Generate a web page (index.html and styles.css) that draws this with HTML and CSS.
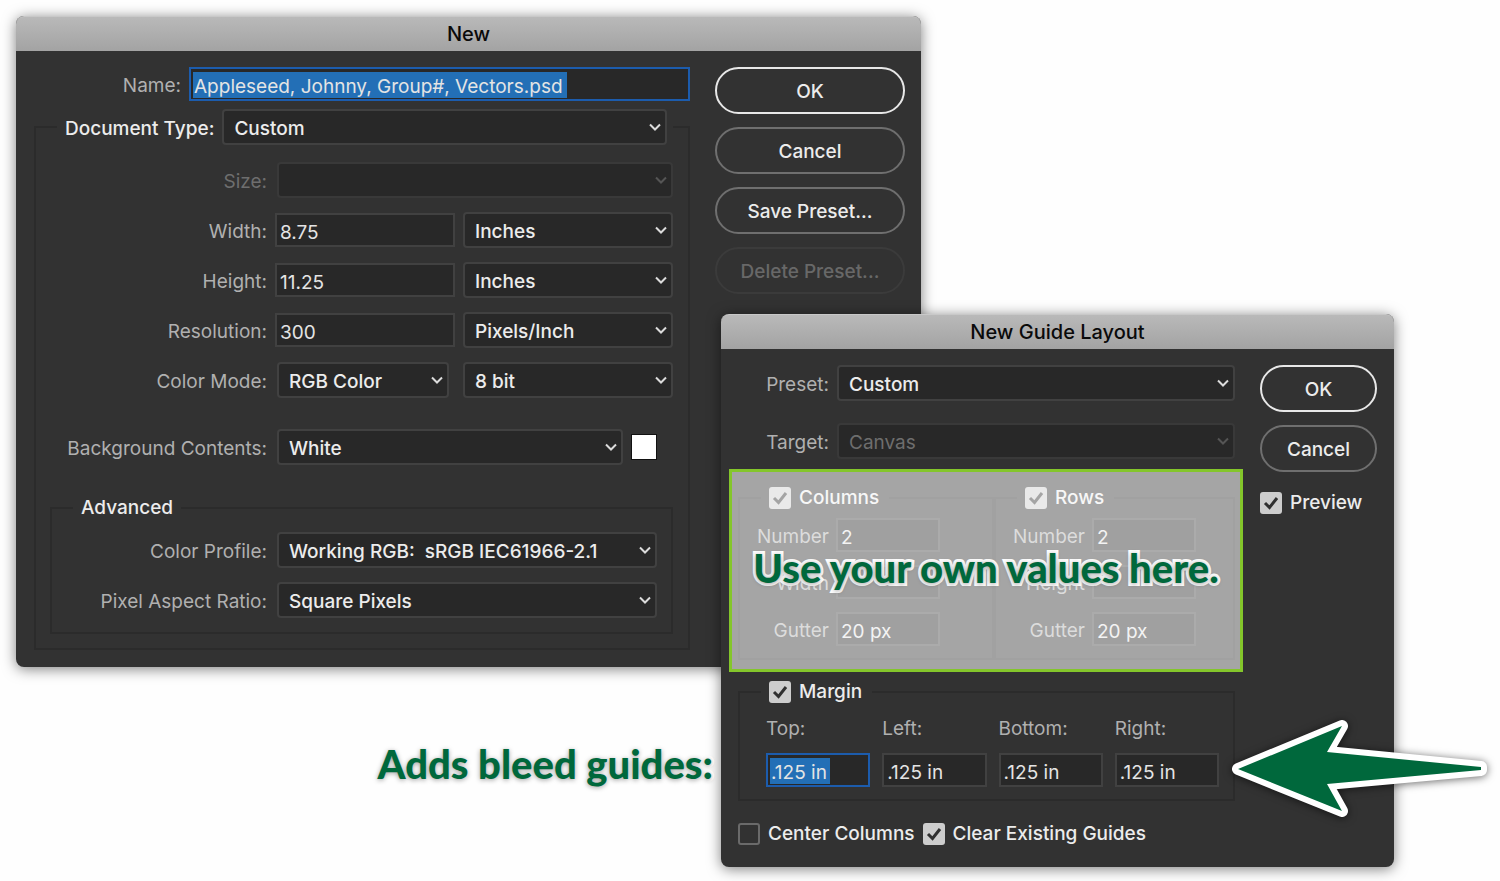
FILE: index.html
```html
<!DOCTYPE html>
<html lang="en">
<head>
<meta charset="utf-8">
<title>New document and guide layout</title>
<link rel="stylesheet" href="styles.css">
</head>
<body>
<main class="desktop">

  <section class="dialog dialog--new" aria-labelledby="new-title">
    <h1 class="dialog__title" id="new-title">New</h1>
    <form class="dialog__body">
      <div class="dialog__main">
        <div class="row row--name">
          <label class="label label--name" for="name">Name:</label>
          <input class="field field--selected field--name" id="name" type="text" value="Appleseed, Johnny, Group#, Vectors.psd">
        </div>
        <fieldset class="group group--document">
          <legend class="group__legend group__legend--wide">
            <label class="group__name" for="doctype">Document Type:</label>
            <select class="popup" id="doctype"><option>Custom</option></select>
          </legend>
          <div class="row">
            <label class="label label--disabled" for="size">Size:</label>
            <select class="popup popup--inset" id="size" disabled><option></option></select>
          </div>
          <div class="row">
            <label class="label" for="width">Width:</label>
            <input class="field" id="width" type="text" value="8.75">
            <select class="popup popup--unit" aria-label="Width unit"><option>Inches</option></select>
          </div>
          <div class="row">
            <label class="label" for="height">Height:</label>
            <input class="field" id="height" type="text" value="11.25">
            <select class="popup popup--unit" aria-label="Height unit"><option>Inches</option></select>
          </div>
          <div class="row">
            <label class="label" for="resolution">Resolution:</label>
            <input class="field" id="resolution" type="text" value="300">
            <select class="popup popup--unit" aria-label="Resolution unit"><option>Pixels/Inch</option></select>
          </div>
          <div class="row">
            <label class="label" for="mode">Color Mode:</label>
            <select class="popup popup--inset popup--mode" id="mode"><option>RGB Color</option></select>
            <select class="popup popup--unit" aria-label="Bit depth"><option>8 bit</option></select>
          </div>
          <div class="row row--background">
            <label class="label" for="background">Background Contents:</label>
            <select class="popup popup--inset" id="background"><option>White</option></select>
            <button class="swatch" type="button" aria-label="Background color"></button>
          </div>
          <fieldset class="group group--advanced">
            <legend class="group__legend group__legend--advanced">Advanced</legend>
            <div class="row">
              <label class="label" for="profile">Color Profile:</label>
              <select class="popup popup--inset" id="profile"><option>Working RGB:&nbsp; sRGB IEC61966-2.1</option></select>
            </div>
            <div class="row">
              <label class="label" for="aspect">Pixel Aspect Ratio:</label>
              <select class="popup popup--inset" id="aspect"><option>Square Pixels</option></select>
            </div>
          </fieldset>
        </fieldset>
      </div>
      <div class="actions actions--wide">
        <button class="button button--default" type="button">OK</button>
        <button class="button" type="button">Cancel</button>
        <button class="button" type="button">Save Preset...</button>
        <button class="button" type="button" disabled>Delete Preset...</button>
      </div>
    </form>
  </section>

  <section class="dialog dialog--guides" aria-labelledby="guides-title">
    <h2 class="dialog__title" id="guides-title">New Guide Layout</h2>
    <form class="dialog__body dialog__body--guides">
      <div class="dialog__main">
        <div class="row row--preset">
          <label class="label label--guides" for="preset">Preset:</label>
          <select class="popup" id="preset"><option>Custom</option></select>
        </div>
        <div class="row row--target">
          <label class="label label--guides" for="target">Target:</label>
          <select class="popup" id="target" disabled><option>Canvas</option></select>
        </div>
        <div class="grids">
          <fieldset class="group group--grid">
            <legend class="group__legend group__legend--check">
              <label class="check"><input class="check__box" type="checkbox" checked>Columns</label>
            </legend>
            <div class="row"><label class="label label--grid" for="col-number">Number</label><input class="field field--short" id="col-number" type="text" value="2"></div>
            <div class="row"><label class="label label--grid" for="col-width">Width</label><input class="field field--short" id="col-width" type="text"></div>
            <div class="row"><label class="label label--grid" for="col-gutter">Gutter</label><input class="field field--short" id="col-gutter" type="text" value="20 px"></div>
          </fieldset>
          <fieldset class="group group--grid">
            <legend class="group__legend group__legend--check">
              <label class="check"><input class="check__box" type="checkbox" checked>Rows</label>
            </legend>
            <div class="row"><label class="label label--grid" for="row-number">Number</label><input class="field field--short" id="row-number" type="text" value="2"></div>
            <div class="row"><label class="label label--grid" for="row-height">Height</label><input class="field field--short" id="row-height" type="text"></div>
            <div class="row"><label class="label label--grid" for="row-gutter">Gutter</label><input class="field field--short" id="row-gutter" type="text" value="20 px"></div>
          </fieldset>
          <div class="highlight"><p class="callout">Use your own values here.</p></div>
        </div>
        <fieldset class="group group--margin">
          <legend class="group__legend group__legend--check">
            <label class="check"><input class="check__box" type="checkbox" checked>Margin</label>
          </legend>
          <div class="margins">
            <label class="margins__item">Top:<input class="field field--selected field--top" type="text" value=".125 in"></label>
            <label class="margins__item">Left:<input class="field" type="text" value=".125 in"></label>
            <label class="margins__item">Bottom:<input class="field" type="text" value=".125 in"></label>
            <label class="margins__item">Right:<input class="field" type="text" value=".125 in"></label>
          </div>
        </fieldset>
        <div class="options">
          <label class="check"><input class="check__box" type="checkbox">Center Columns</label>
          <label class="check"><input class="check__box" type="checkbox" checked>Clear Existing Guides</label>
        </div>
      </div>
      <div class="actions">
        <button class="button button--default" type="button">OK</button>
        <button class="button" type="button">Cancel</button>
        <label class="check check--preview"><input class="check__box" type="checkbox" checked>Preview</label>
      </div>
    </form>
  </section>

  <p class="callout callout--bleed">Adds bleed guides:</p>
  <svg class="arrow" width="270" height="112" viewBox="0 0 270 112" aria-hidden="true">
    <path d="M14 56 L118 13 L103 39 L257 54 V57 L103 71 L118 98 Z" fill="#00683c" stroke="#fff" stroke-width="12" stroke-linejoin="round" paint-order="stroke"/>
  </svg>
</main>
</body>
</html>
```

FILE: styles.css
```css
* {
  box-sizing: border-box;
}

body {
  margin: 0;
  background: #fefefe;
  color: #ececec;
  font: 500 19px/24px Inter, "Liberation Sans", sans-serif;
}

h1,
h2,
p,
form,
fieldset,
legend {
  margin: 0;
  padding: 0;
}

input,
select,
button {
  margin: 0;
  color: inherit;
  font: inherit;
}

.desktop {
  position: relative;
  min-width: 1300px;
  min-height: 881px;
  overflow: hidden;
}

/* Windows */

.dialog {
  position: absolute;
  border-radius: 8px;
  background: #323232;
  box-shadow: 0 2px 14px rgba(0, 0, 0, 0.5);
}

.dialog--new {
  top: 16px;
  left: 16px;
  right: 579px;
}

.dialog--guides {
  top: 314px;
  left: 721px;
  right: 106px;
}

.dialog__title {
  height: 35px;
  border-top: 1px solid #c8c8c8;
  border-radius: 8px 8px 0 0;
  background: linear-gradient(#b9b9b9, #a3a3a3);
  color: #0a0a0a;
  font-size: 20px;
  font-weight: 500;
  line-height: 35px;
  text-align: center;
}

.dialog__body {
  display: flex;
  gap: 25px;
  padding: 16px 16px 17px 18px;
}

.dialog__body--guides {
  padding: 16px 17px 21px;
}

.dialog__main {
  flex: 1;
  min-width: 0;
}

/* Rows and labels */

.row {
  display: flex;
  align-items: center;
  gap: 8px;
  height: 36px;
  margin-bottom: 14px;
}

.row--name {
  height: 34px;
  margin-bottom: 8px;
}

.row--background {
  margin: 31px 16px 31px 0;
}

.row--preset {
  margin: 0 0 22px;
}

.row--target {
  margin-bottom: 27px;
}

.label {
  flex: none;
  width: 216px;
  padding-top: 4px;
  color: #b0b0b0;
  font-weight: 400;
  text-align: right;
  white-space: nowrap;
}

.label--name {
  width: 147px;
}

.label--guides {
  width: 91px;
}

.label--grid {
  width: 89px;
}

.label--disabled {
  color: #6e6e6e;
}

/* Controls */

.field {
  flex: 1;
  width: 100%;
  min-width: 0;
  height: 34px;
  padding: 4px 3px 0;
  border: 2px solid #414141;
  background: #282828;
  color: #e4e4e4;
  font-weight: 400;
}

.field--short {
  flex: none;
  width: 104px;
}

.field--selected {
  border-color: #1c5cad;
  background: #282828 linear-gradient(#236fb6, #236fb6) no-repeat 2px 3px;
}

.field--name {
  background-size: 374px 26px;
}

.field--top {
  background-size: 60px 26px;
}

.popup {
  flex: 1;
  min-width: 0;
  height: 36px;
  padding: 4px 24px 0 10px;
  appearance: none;
  border: 2px solid #414141;
  border-radius: 4px;
  background: #282828 url("data:image/svg+xml,%3Csvg xmlns='http://www.w3.org/2000/svg' width='12' height='8'%3E%3Cpath d='M1 1.5 6 6.500 11 1.500' fill='none' stroke='%23dcdcdc' stroke-width='2'/%3E%3C/svg%3E") no-repeat right 4px center;
  opacity: 1;
}

.popup:disabled {
  border-color: #393939;
  background-image: url("data:image/svg+xml,%3Csvg xmlns='http://www.w3.org/2000/svg' width='12' height='8'%3E%3Cpath d='M1 1.5 6 6.500 11 1.500' fill='none' stroke='%23555' stroke-width='2'/%3E%3C/svg%3E");
  color: #6e6e6e;
  font-weight: 400;
}

.popup--inset {
  margin-left: 2px;
}

.popup--mode {
  margin-right: 6px;
}

.popup--unit {
  flex: none;
  width: 210px;
}

.swatch {
  width: 26px;
  height: 26px;
  padding: 0;
  border: 1px solid #111;
  background: #fff;
}

.actions {
  display: flex;
  flex: none;
  flex-direction: column;
  gap: 13px;
  width: 117px;
}

.actions--wide {
  width: 190px;
}

.button {
  height: 47px;
  padding: 2px 0 0;
  border: 2px solid #6f6f6f;
  border-radius: 24px;
  background: none;
}

.button--default {
  border-color: #e8e8e8;
}

.button:disabled {
  border-color: #3b3b3b;
  color: #686868;
}

.check {
  display: flex;
  align-items: center;
  gap: 8px;
  white-space: nowrap;
}

.check--preview {
  margin-top: 6px;
}

.check__box {
  width: 22px;
  height: 22px;
  appearance: none;
  border: 2px solid #6a6a6a;
  border-radius: 3px;
}

.check__box:checked {
  border: 0;
  background: #cdcdcd url("data:image/svg+xml,%3Csvg xmlns='http://www.w3.org/2000/svg' width='22' height='22'%3E%3Cpath d='M5 11 9.500 15.500 17 6' fill='none' stroke='%23303030' stroke-width='3'/%3E%3C/svg%3E") no-repeat;
}

/* Groups */

.group {
  min-width: 0;
  border: 2px solid #2b2b2b;
}

.group--document {
  padding: 0 15px 14px;
}

.group__legend--wide {
  display: flex;
  align-items: center;
  gap: 8px;
  width: calc(100% - 6px);
  margin: 0 0 17px 6px;
  padding: 0 6px 0 8px;
  white-space: nowrap;
}

.group__name {
  padding-top: 3px;
}

.group--advanced {
  margin-left: -1px;
  padding: 0 14px 0 0;
}

.group--advanced .label {
  width: 215px;
}

.group__legend--advanced {
  margin: 0 0 12px 21px;
  padding: 0 8px;
}

.group__legend--check {
  margin-left: 21px;
  padding: 0 10px 0 8px;
}

.grids {
  position: relative;
  display: grid;
  grid-template-columns: 256px 1fr;
  margin-bottom: 20px;
}

.group--grid {
  height: 174px;
  padding-top: 8px;
}

.group--grid .row {
  gap: 7px;
  height: 34px;
  margin-bottom: 13px;
}

.group--margin {
  padding: 0 14px 12px 26px;
}

.group--margin .group__legend {
  margin-left: -5px;
}

.margins {
  display: grid;
  grid-template-columns: repeat(4, 1fr);
  gap: 12px;
  padding-top: 13px;
}

.margins__item {
  display: flex;
  flex-direction: column;
  gap: 12px;
  min-width: 0;
  color: #b0b0b0;
  font-weight: 400;
}

.margins .field {
  flex: none;
}

.options {
  display: flex;
  gap: 8px;
  margin-top: 21px;
}

/* Annotations */

.highlight {
  position: absolute;
  inset: -17px -8px -12px -9px;
  display: flex;
  align-items: center;
  justify-content: center;
  padding-bottom: 6px;
  border: 3px solid #84c62b;
  background: rgba(255, 255, 255, 0.56);
}

.callout {
  color: #00683c;
  font: 900 40px/46px Lato, "Open Sans", sans-serif;
  white-space: nowrap;
  -webkit-text-stroke: 6px #fff;
  paint-order: stroke fill;
  text-shadow: 0 1px 5px rgba(0, 0, 0, 0.4);
}

.callout--bleed {
  position: absolute;
  top: 741px;
  right: 787px;
}

.arrow {
  position: absolute;
  top: 713px;
  right: 6px;
  filter: drop-shadow(0 1px 4px rgba(0, 0, 0, 0.6));
}
```
